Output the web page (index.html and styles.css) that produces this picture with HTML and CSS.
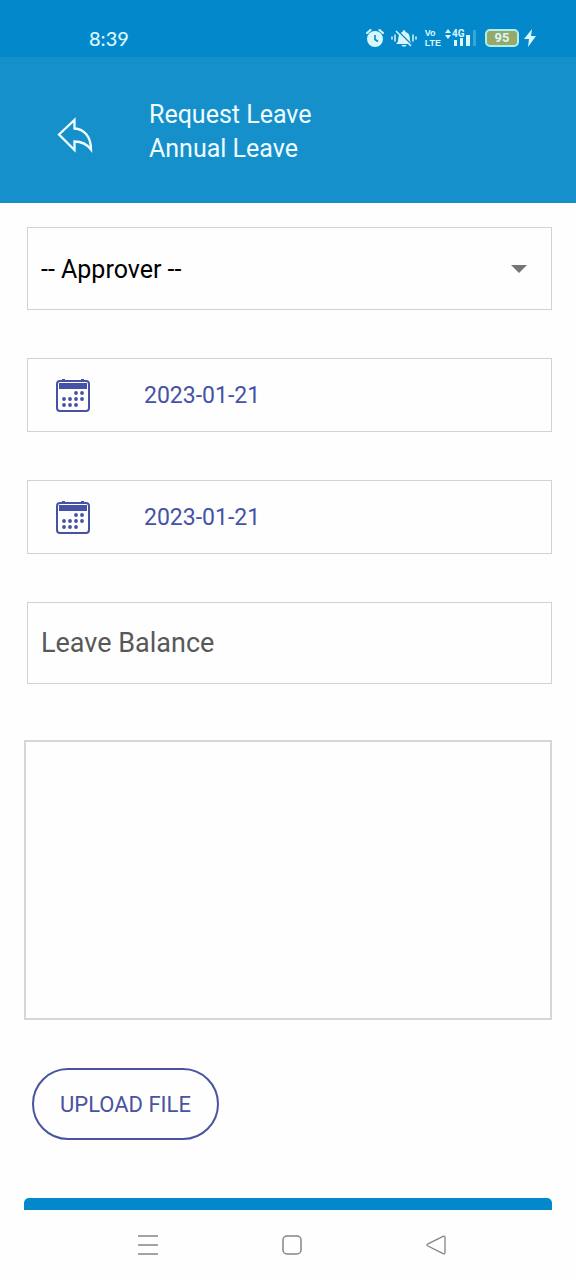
FILE: index.html
```html
<!DOCTYPE html>
<html lang="en">
<head>
<meta charset="utf-8">
<meta name="viewport" content="width=device-width, initial-scale=1">
<title>Request Leave</title>
<link rel="stylesheet" href="styles.css">
</head>
<body>
<div class="status-bar">
  <span class="clock">8:39</span>
  <div class="indicators">
    <svg class="alarm" width="18" height="20" viewBox="0 0 18 20" aria-hidden="true">
      <circle cx="9" cy="11" r="8" fill="currentColor"/>
      <path d="M1 5 4.500 2M17 5 13.500 2" stroke="currentColor" stroke-width="2" stroke-linecap="round"/>
      <path d="M9 7v4.500l3 2" fill="none" stroke="#0488cc" stroke-width="1.600"/>
    </svg>
    <svg class="muted" width="26" height="20" viewBox="0 0 26 20" aria-hidden="true">
      <path d="M5 16c2.500-2 2-4 2.500-7 .4-2.800 2-4.500 4-5 0-2.500 3-2.500 3 0 2.500.5 4 2.500 4.200 5 .2 3 .3 5 2.300 7zM10.500 17h5c-.6 2.300-4.400 2.300-5 0z" fill="currentColor"/>
      <path d="M6.500 2.500 21 17" stroke="#0488cc" stroke-width="1.500"/>
      <path d="M5 3 20 18" stroke="currentColor" stroke-width="1.500"/>
      <path d="M1 9v2M4 7v6M22 7v6M25 9v2" stroke="currentColor" stroke-width="1.500" stroke-linecap="round"/>
    </svg>
    <span class="volte"><span>Vo</span><span>LTE</span></span>
    <svg class="signal" width="32" height="28" viewBox="0 0 32 28" aria-hidden="true">
      <path d="M0 9 3 5l3 4zM0 11h6l-3 4z" fill="currentColor"/>
      <text class="network" x="7" y="13">4G</text>
      <path d="M9 16h3v6H9zM15 14h3v8h-3zM21 11h4v11h-4z" fill="currentColor"/>
      <path d="M28 6h3v16h-3z" fill="currentColor" opacity=".25"/>
    </svg>
    <span class="battery">95</span>
    <svg class="bolt" width="12" height="18" viewBox="0 0 12 18" aria-hidden="true">
      <path d="M8 0 0 10h5L4 18 12 7H7z" fill="currentColor"/>
    </svg>
  </div>
</div>

<header class="app-header">
  <button class="back" type="button" aria-label="Back">
    <svg width="36" height="36" viewBox="0 0 36 36" aria-hidden="true">
      <path d="M2 17.500 17.500 3v8.500C27 12 34 19.500 34 32.500 29.500 26.500 25 24.500 17.500 24.500V33z" fill="none" stroke="currentColor" stroke-width="2.300"/>
    </svg>
  </button>
  <h1 class="title"><span>Request Leave</span><span>Annual Leave</span></h1>
</header>

<main class="content">
  <form class="leave-form">
    <div class="select-wrap">
      <select class="field select" aria-label="Approver">
        <option>-- Approver --</option>
      </select>
      <svg class="caret" width="16" height="8" viewBox="0 0 16 8" aria-hidden="true"><path d="M0 0h16L8 8z" fill="currentColor"/></svg>
    </div>
    <button class="field date" type="button" aria-label="Start date 2023-01-21">
      <svg width="34" height="34" viewBox="0 0 34 34" aria-hidden="true">
        <rect x="1" y="3" width="32" height="30" rx="3" fill="none" stroke="currentColor" stroke-width="2"/>
        <path d="M3 5h28v6H3zM6 1h3v2H6zM25 1h3v2h-3z" fill="currentColor"/>
        <path d="M20 15h.01M26 15h.01M8 21h.01M14 21h.01M20 21h.01M26 21h.01M8 27h.01M14 27h.01M20 27h.01" stroke="currentColor" stroke-width="3.800" stroke-linecap="round"/>
      </svg>
      <span>2023-01-21</span>
    </button>
    <button class="field date" type="button" aria-label="End date 2023-01-21">
      <svg width="34" height="34" viewBox="0 0 34 34" aria-hidden="true">
        <rect x="1" y="3" width="32" height="30" rx="3" fill="none" stroke="currentColor" stroke-width="2"/>
        <path d="M3 5h28v6H3zM6 1h3v2H6zM25 1h3v2h-3z" fill="currentColor"/>
        <path d="M20 15h.01M26 15h.01M8 21h.01M14 21h.01M20 21h.01M26 21h.01M8 27h.01M14 27h.01M20 27h.01" stroke="currentColor" stroke-width="3.800" stroke-linecap="round"/>
      </svg>
      <span>2023-01-21</span>
    </button>
    <input class="field balance" type="text" placeholder="Leave Balance" aria-label="Leave Balance">
    <textarea class="reason" aria-label="Reason"></textarea>
    <button class="upload" type="button">UPLOAD FILE</button>
    <button class="submit" type="submit" aria-label="Submit"></button>
  </form>
</main>

<nav class="system-nav" aria-label="System">
  <button type="button" aria-label="Recent apps">
    <svg width="22" height="22" viewBox="0 0 22 22" aria-hidden="true"><path d="M1 2h20M1 11h20M1 20h20" stroke="currentColor" stroke-width="1.500"/></svg>
  </button>
  <button type="button" aria-label="Home">
    <svg width="22" height="22" viewBox="0 0 22 22" aria-hidden="true"><rect x="2" y="2" width="18" height="18" rx="4" fill="none" stroke="currentColor" stroke-width="1.500"/></svg>
  </button>
  <button type="button" aria-label="Go back">
    <svg width="22" height="22" viewBox="0 0 22 22" aria-hidden="true"><path d="M2.500 10.200 18 2.300q2-.8 2 1.200v15q0 2-2 1.200L2.500 11.800q-1.300-.8 0-1.600z" fill="none" stroke="currentColor" stroke-width="1.300"/></svg>
  </button>
</nav>
</body>
</html>
```
FILE: styles.css
```css
* {
  box-sizing: border-box;
}

body {
  display: flex;
  flex-direction: column;
  height: 100vh;
  margin: 0;
  background: #fefefe;
  font-family: Roboto, "Liberation Sans", sans-serif;
}

button {
  padding: 0;
  border: 0;
  background: none;
  color: inherit;
  font: inherit;
}

svg {
  display: block;
  flex: none;
}

.status-bar {
  display: flex;
  flex: none;
  align-items: center;
  justify-content: space-between;
  padding: 24px 40px 5px 89px;
  background: #0488cc;
  color: #d8f8fc;
}

.clock {
  font: 500 20px/20px Lato, sans-serif;
}

.indicators {
  display: flex;
  align-items: center;
}

.muted {
  margin-left: 7px;
}

.volte {
  display: flex;
  flex-direction: column;
  margin-left: 8px;
  font: 700 9px/10px "Liberation Sans", sans-serif;
}

.signal {
  margin-left: 4px;
}

.network {
  fill: currentColor;
  font: 700 10px Roboto, sans-serif;
}

.battery {
  width: 34px;
  margin-left: 8px;
  border: 2px solid #b0eee8;
  border-radius: 5px;
  background: #98a868;
  font: 700 13px/14px Roboto, sans-serif;
  text-align: center;
}

.bolt {
  margin-left: 5px;
}

.app-header {
  display: flex;
  flex: none;
  gap: 56px;
  padding: 41px 57px 37px;
  background: #1590cb;
  color: #f0fcff;
}

.back {
  align-self: center;
  padding-top: 6px;
}

.title {
  display: flex;
  flex-direction: column;
  margin: 0;
  font-size: 25px;
  font-weight: 400;
  line-height: 34px;
}

.content {
  flex: 1;
  min-height: 0;
  overflow-y: auto;
  scrollbar-width: none;
}

.leave-form {
  display: flex;
  flex-direction: column;
  gap: 48px;
  padding: 24px 24px 0;
}

.field {
  border: 1px solid #d2d2d2;
  border-radius: 0;
  background: #fefefe;
}

.select-wrap {
  display: grid;
  align-items: center;
  margin-left: 3px;
}

.select-wrap > * {
  grid-area: 1 / 1;
}

.select {
  width: 100%;
  height: 83px;
  padding: 1px 48px 0 13px;
  appearance: none;
  color: #000;
  font: 25px Roboto, sans-serif;
}

.caret {
  justify-self: end;
  margin-right: 25px;
  color: #757575;
  pointer-events: none;
}

.date {
  display: flex;
  gap: 54px;
  align-items: center;
  height: 74px;
  margin-left: 3px;
  padding: 0 28px;
  color: #4552a5;
  font-size: 23px;
}

.balance {
  height: 82px;
  margin-left: 3px;
  padding: 0 13px;
  font: 27px Roboto, sans-serif;
}

.balance::placeholder {
  color: #585858;
}

.reason {
  height: 280px;
  margin-top: 8px;
  border: 2px solid #d6d6d6;
  border-radius: 0;
  background: #fefefe;
  resize: none;
}

.upload {
  align-self: flex-start;
  height: 72px;
  margin-left: 8px;
  padding: 0 26px;
  border: 2px solid #4854a0;
  border-radius: 36px;
  color: #4854a0;
  font-size: 22px;
}

.submit {
  height: 72px;
  margin-top: 10px;
  border-radius: 5px;
  background: #0488cc;
}

.system-nav {
  display: flex;
  flex: none;
  gap: 122px;
  justify-content: center;
  height: 70px;
  padding-right: 7px;
  padding-left: 15px;
  color: #858585;
}
```
